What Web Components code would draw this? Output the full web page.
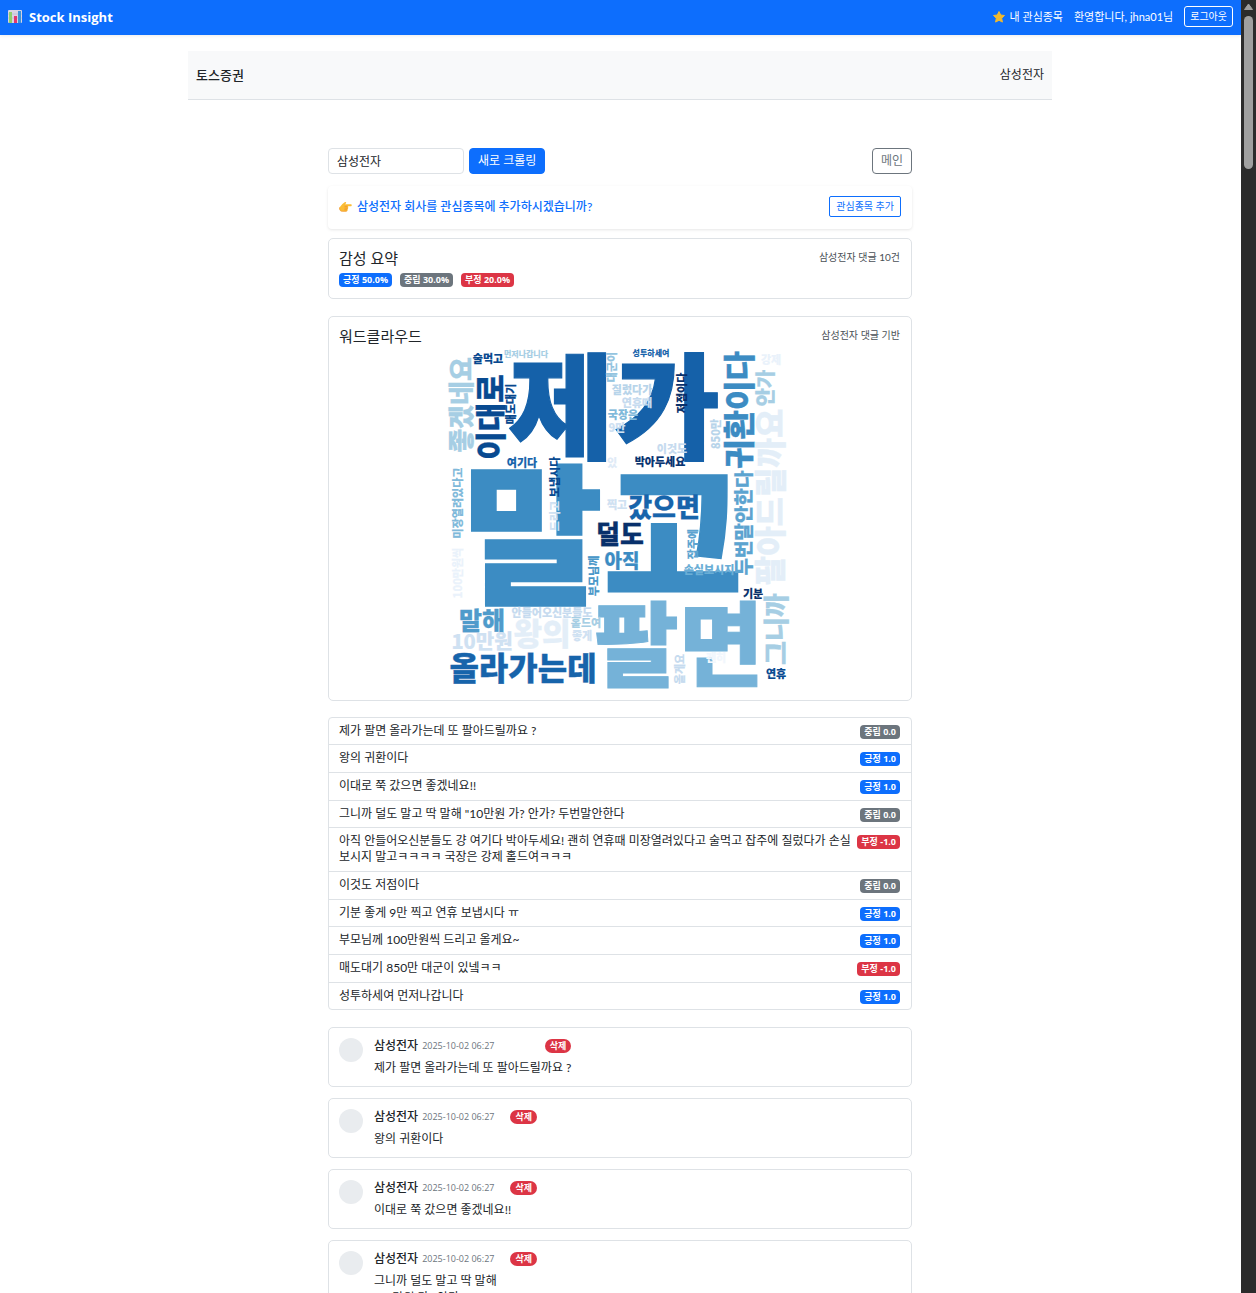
<!DOCTYPE html>
<html lang="ko">
<head>
<meta charset="utf-8">
<title>Stock Insight</title>
<style>
:root{--primary:#0d6efd;--secondary:#6c757d;--danger:#dc3545;--line:#dee2e6;--ink:#212529;--latin:"Open Sans","Noto Sans CJK KR",sans-serif}
body{margin:0;background:#fff;color:var(--ink);font:12px/16px Lato,"Noto Sans CJK KR",sans-serif}
</style>
</head>
<body>
<stock-app></stock-app>
<script>
const base = '*{box-sizing:border-box}button,input,a{font:inherit;color:inherit}button{cursor:pointer;margin:0}h1,h2,p,ul{margin:0;padding:0;font-weight:400}a{text-decoration:none}';
function define(name, html, setup) {
  const template = document.createElement('template');
  template.innerHTML = html.replace('<style>', '<style>' + base);
  customElements.define(name, class extends HTMLElement {
    constructor() {
      super();
      this.attachShadow({mode: 'open'}).append(template.content.cloneNode(true));
    }
    connectedCallback() { if (setup) setup(this, this.shadowRoot); }
  });
}

define('stock-navbar', `<style>
:host{display:block;background:var(--primary);color:#fff;box-shadow:0 1px 3px rgba(0,0,0,.08)}
nav{display:flex;align-items:center;justify-content:space-between;height:35px;padding:0 8px 2px}
.brand,.links,.watch{display:flex;align-items:center}
.brand{gap:7px;font:700 13px/20px var(--latin)}
.links{gap:11px;font-size:11px}
.watch{gap:5px}
button{font-size:10px;line-height:15px;padding:2px 5px;border:1px solid #fff;border-radius:3px;background:none}
</style>
<nav>
<a class="brand" href="#"><svg width="14" height="14" viewBox="0 0 14 14" aria-hidden="true"><rect width="14" height="13" rx="1" fill="#d9d3e3"/><path d="M0 4h14M0 8h14" stroke="#bfc2d8"/><rect x="1" y="2" width="3" height="11" fill="#8fd16c"/><rect x="6" y="6" width="3" height="7" fill="#e2366f"/><rect x="10" y="1" width="3" height="12" fill="#3c94d8"/></svg>Stock Insight</a>
<div class="links">
<a class="watch" href="#"><svg width="12" height="12" viewBox="0 0 12 12" aria-hidden="true"><path d="M6 .5 7.7 4l3.8.5-2.8 2.7.7 3.9L6 9.3l-3.4 1.8.7-3.9L.5 4.5 4.3 4Z" fill="#f0b92f" stroke="#f0b92f" stroke-linejoin="round"/></svg>내 관심종목</a>
<span>환영합니다, jhna01님</span>
<button type="button">로그아웃</button>
</div></nav>`);

define('page-header', `<style>
:host{display:block}
header{display:flex;align-items:center;justify-content:space-between;height:49px;padding:0 8px;background:#f8f9fa;border-bottom:1px solid var(--line)}
h1{font-size:13px;font-weight:500}
</style><header><h1><slot></slot></h1><slot name="company"></slot></header>`);

define('search-form', `<style>
:host{display:block}
form{display:flex;gap:5px}
input{width:136px;height:26px;padding:0 8px 2px;border:1px solid var(--line);border-radius:4px;background:#fff;outline:0}
button{height:26px;padding:0 8px;border:1px solid var(--primary);border-radius:4px;background:var(--primary);color:#fff}
.main{margin-left:auto;background:none;border-color:var(--secondary);color:var(--secondary)}
</style><form><input aria-label="종목" value="삼성전자"><button type="button">새로 크롤링</button><button type="button" class="main">메인</button></form>`);

define('watch-prompt', `<style>
:host{display:block}
div{display:flex;align-items:center;gap:5px;height:43px;padding:0 11px 2px;border-radius:4px;box-shadow:0 1px 3px rgba(0,0,0,.1);color:var(--primary);font-weight:500}
button{margin-left:auto;font-size:10px;font-weight:400;line-height:15px;padding:2px 6px;border:1px solid var(--primary);border-radius:2px;background:none}
</style><div><svg width="13" height="12" viewBox="0 0 13 12" aria-hidden="true"><path d="M.5 6.5 3.4 3 6 1.1c1-.5 1.6.5.8 1.3L6 3.2h5.7c1.4 0 1.4 2 0 2H8.6c1 .3.9 1.6.1 1.8.8.5.5 1.6-.3 1.7.5.8 0 1.6-.8 1.6H3.2C1.3 10.3.5 9 .5 6.5Z" fill="#fbbd35"/><path d="M5.5 5.3h3M5.5 7.1h3M5.3 8.800h2.8" stroke="#ee8b28" stroke-width=".7"/><path d="M.5 6.5c0 2.5.8 3.8 2.7 3.8h4.4" fill="none" stroke="#f19a32" stroke-width=".8"/></svg><span><slot></slot></span><button type="button">관심종목 추가</button></div>`);

define('info-card', `<style>
:host{display:block;padding:10px;border:1px solid var(--line);border-radius:5px}
header{display:flex;justify-content:space-between;height:20px}
h2{font-size:15px;line-height:18px}
small{font-size:10px;line-height:17px;color:#4b5157;padding-right:1px}
</style><header><h2><slot name="title"></slot></h2><small><slot name="note"></slot></small></header><slot></slot>`);

define('sentiment-badge', `<style>
:host{display:inline-block;flex:none;padding:0 4px;height:14px;border-radius:4px;background:var(--secondary);color:#fff;font:700 9px/14px var(--latin);white-space:nowrap}
:host([tone=positive]){background:var(--primary)}
:host([tone=negative]){background:var(--danger)}
</style><slot></slot>`);

define('badge-row', `<style>:host{display:flex;gap:8px;padding:4px 0 1px}</style><slot></slot>`);

const words = [
  ['먼저나갑니다',78,7,8,'#a6cee4'],['술먹고',40,12,11,'#08488e'],['좋겠네요',14,58,26,'#a6cee4',1],['이대로',43,70,31,'#084a91',1],
  ['매도대기',63,57,11,'#08488e',1],['제가',166,62,115,'#1561a9'],['여기다',74,116,11,'#1764ab'],['보냅시다',107,130,11,'#084a91',1],
  ['미장열려있다고',10,156,11,'#7fb9da',1],['말고',155,191,152,'#3c8cc3'],['드리고',107,169,11,'#cfe1f2',1],['대군이',164,20,11,'#94c4df',1],
  ['있',164,116,11,'#dfebf7'],['찍고',169,158,11,'#cfe1f2'],['성투하세여',203,6,8,'#1764ab'],['질렀다가',184,43,11,'#b7d4ea'],
  ['연휴때',189,56,11,'#c6dbef'],['국장은',175,68,11,'#7fb9da'],['9만',169,81,11,'#cfe1f2'],['저점이다',234,46,11,'#08306b',1],
  ['850만',268,87,11,'#b7d4ea',1],['이것도',224,102,11,'#c6dbef'],['박아두세요',212,115,11,'#083370'],['귀환이다',291,63,32,'#3c8cc3',1],
  ['강제',323,13,11,'#eaf2fb'],['안가',318,41,20,'#a6cee4',1],['팔아드릴까요',322,150,32,'#e3eef8',1],['두번말안한다',296,176,19,'#5ca4d0',1],
  ['갔으면',216,161,26,'#1764ab'],['덜도',172,188,26,'#08306b'],['아직',174,214,19,'#3c8cc3'],['잡주에',245,197,11,'#5ca4d0',1],
  ['손실보시지',261,223,11,'#6aaed6'],['부모님께',146,229,11,'#4a98c9',1],['100만원씩',10,226,11,'#eaf2fb',1],['기분',305,247,11,'#08306b'],
  ['말해',34,274,25,'#4f9bcb'],['안들어오신분들도',104,266,11,'#c6dbef'],['홀드여',138,276,11,'#a6cee4'],['좋게',134,289,11,'#cfe1f2'],
  ['왕의',94,287,31,'#e3eef8'],['10만원',34,295,20,'#cfe1f2'],['올라가는데',75,321,32,'#1764ab'],['팔면',231,299,92,'#75b2d8'],
  ['올게요',232,322,11,'#c6dbef',1],['괜히',268,311,11,'#f1f7fd'],['그니까',329,282,26,'#a6cee4',1],['연휴',328,327,11,'#084a91']
];
define('word-cloud', `<style>
:host{display:block}
svg{display:block;width:100%;max-width:344px;margin:0 auto;overflow:visible}
text{font-family:"Noto Sans CJK KR",sans-serif;font-weight:900;text-anchor:middle}
</style><svg viewBox="0 0 344 343" role="img" aria-label="워드클라우드"></svg>`, (host, root) => {
  const svg = root.querySelector('svg');
  if (svg.childNodes.length) return;
  // Largest words first, so that the small ones stay readable on top of them.
  for (const [word, x, y, size, color, upright] of [...words].sort((a, b) => b[3] - a[3])) {
    const text = document.createElementNS('http://www.w3.org/2000/svg', 'text');
    text.textContent = word;
    text.setAttribute('y', Math.round(size * 0.36));
    text.setAttribute('font-size', size);
    text.setAttribute('fill', color);
    text.setAttribute('stroke', color);
    text.setAttribute('stroke-width', size * 0.01);
    text.setAttribute('transform', `translate(${x} ${y})` + (upright ? ' rotate(-90)' : ''));
    svg.append(text);
  }
});

define('comment-list', `<style>
:host{display:block}
ul{list-style:none;border:1px solid var(--line);border-radius:4px}
li{display:flex;justify-content:space-between;padding:5px 10px 6px;border-bottom:1px solid var(--line)}
li:nth-child(3n+1){padding-bottom:5px}
li:last-child{border-bottom:0}
p{word-break:break-all}
sentiment-badge{margin:2px 1px -2px 0}
</style><ul></ul>`, (host, root) => {
  const ul = root.querySelector('ul');
  if (ul.children.length) return;
  const tones = {'중립 0.0': '', '긍정 1.0': 'positive', '부정 -1.0': 'negative'};
  for (const [text, score] of [
    ['제가 팔면 올라가는데 또 팔아드릴까요 ?','중립 0.0'],['왕의 귀환이다','긍정 1.0'],['이대로 쭉 갔으면 좋겠네요!!','긍정 1.0'],
    ['그니까 덜도 말고 딱 말해 "10만원 가? 안가? 두번말안한다','중립 0.0'],
    ['아직 안들어오신분들도 걍 여기다 박아두세요! 괜히 연휴때 미장열려있다고 술먹고 잡주에 질렀다가 손실보시지 말고ㅋㅋㅋㅋ 국장은 강제 홀드여ㅋㅋㅋ','부정 -1.0'],
    ['이것도 저점이다','중립 0.0'],['기분 좋게 9만 찍고 연휴 보냅시다 ㅠ','긍정 1.0'],['부모님께 100만원씩 드리고 올게요~','긍정 1.0'],
    ['매도대기 850만 대군이 있넼ㅋㅋ','부정 -1.0'],['성투하세여 먼저나갑니다','긍정 1.0']]) {
    const li = document.createElement('li');
    const p = document.createElement('p');
    const badge = document.createElement('sentiment-badge');
    p.textContent = text;
    badge.textContent = score;
    badge.setAttribute('tone', tones[score]);
    li.append(p, badge);
    ul.append(li);
  }
});

define('comment-card', `<style>
:host{display:flex;gap:11px;align-items:flex-start;padding:10px;border:1px solid var(--line);border-radius:5px}
.avatar{flex:none;width:24px;height:24px;border-radius:50%;background:#e9ecef}
header{display:flex;align-items:center;height:16px}
strong{font-weight:500}
time{font:9px/16px var(--latin);color:var(--secondary);margin:0 16px 0 4px}
button{margin-left:auto;padding:0 5px;height:14px;border:0;border-radius:7px;background:var(--danger);color:#fff;font:700 9px/14px var(--latin)}
p{margin-top:5px;line-height:17px;white-space:pre-line}
</style><span class="avatar"></span><article><header><strong>삼성전자</strong><time datetime="2025-10-02T06:27">2025-10-02 06:27</time><button type="button">삭제</button></header><p><slot></slot></p></article>`);

define('page-scrollbar', `<style>
:host{display:flex;flex-direction:column;align-items:center;background:#2b2b2b}
svg{display:block;flex:none}
.thumb{width:9px;height:153px;border-radius:5px;background:#9f9f9f;margin-bottom:auto}
.end{width:9px;height:2px;background:#9f9f9f}
</style><svg width="15" height="16" viewBox="0 0 15 16" aria-hidden="true"><path d="M7.5 4 11.500 9.500H3.500Z" fill="#9f9f9f" stroke="#9f9f9f" stroke-linejoin="round"/></svg><span class="thumb"></span><span class="end"></span>`);

define('stock-app', `<style>
:host{display:grid;grid-template-columns:minmax(0,1fr) 15px;height:100vh;overflow:hidden}
.page{min-width:0}
.content{padding:16px 1px 0 0}
.wide{max-width:864px;margin:0 auto}
main{max-width:584px;margin:48px auto 0}
watch-prompt{margin:12px 0 9px}
.cloud{margin:17px 0 16px}
.comments{display:grid;gap:11px;margin-top:17px}
</style>
<div class="page">
<stock-navbar></stock-navbar>
<div class="content">
<page-header class="wide">토스증권<span slot="company">삼성전자</span></page-header>
<main>
<search-form></search-form>
<watch-prompt>삼성전자 회사를 관심종목에 추가하시겠습니까?</watch-prompt>
<info-card><span slot="title">감성 요약</span><span slot="note">삼성전자 댓글 10건</span>
<badge-row><sentiment-badge tone="positive">긍정 50.0%</sentiment-badge><sentiment-badge>중립 30.0%</sentiment-badge><sentiment-badge tone="negative">부정 20.0%</sentiment-badge></badge-row></info-card>
<info-card class="cloud"><span slot="title">워드클라우드</span><span slot="note">삼성전자 댓글 기반</span><word-cloud></word-cloud></info-card>
<comment-list></comment-list>
<div class="comments">
<comment-card>제가 팔면 올라가는데 또 팔아드릴까요 ?</comment-card>
<comment-card>왕의 귀환이다</comment-card>
<comment-card>이대로 쭉 갔으면 좋겠네요!!</comment-card>
<comment-card>그니까 덜도 말고 딱 말해
"10만원 가? 안가?</comment-card>
</div>
</main>
</div>
</div>
<page-scrollbar></page-scrollbar>`);
</script>
</body>
</html>
